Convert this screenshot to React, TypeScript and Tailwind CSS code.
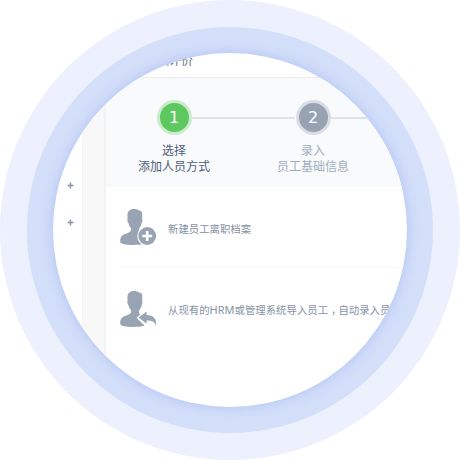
import type { ReactNode } from 'react';

const cjk = "font-['Noto_Sans','Noto_Sans_CJK_SC',sans-serif]";

function Person({ children }: { children: ReactNode }) {
  return (
    <svg className="block h-9 w-[37px] shrink-0" viewBox="0 0 37 36" fill="#98a3b4">
      <path d="M7.400 6C7.700 2 10.500.1 14 .1c1.800 0 3.300.5 4.500 1.200 3 .1 4 1.900 3.800 5.200l-.2 3.300c.6.700.4 3-.4 4.200-.5 2.500-1.500 4.200-2.700 5.800-.4 2 .3 3.300 2 4.200 1.500.8 3.500 1.500 5 2.500L24 34.700c-2.500.8-6.500 1.200-10.500 1.200C6 35.900.2 34.800.2 32.700c0-4.400 1.200-6.200 4.700-7.600 3.200-1.200 5-1.900 5.900-3.300.6-.9.500-2 .1-2.900-1.200-1.300-2-2.800-2.500-4.900-1-1.100-1.400-3.500-.8-4.200z" />
      {children}
    </svg>
  );
}

function Step({ n, active, first, second }: { n: number; active?: boolean; first: string; second: string }) {
  return (
    <div className="flex w-[104px] shrink-0 flex-col items-center">
      <div className={`flex size-[35px] items-center justify-center rounded-full ${active ? 'bg-[#caebcc]' : 'bg-[#d9dee4]'}`}>
        <div className={`flex size-[29px] items-center justify-center rounded-full font-['DejaVu_Sans',sans-serif] text-[16px] leading-none text-white ${active ? 'bg-[#5dc860]' : 'bg-[#97a2b3]'}`}>
          {n}
        </div>
      </div>
      <div className={`mt-2 text-center text-[12px] leading-4 ${active ? 'text-[#4f5d78]' : 'text-[#a3adbe]'}`}>
        <div>{first}</div>
        <div>{second}</div>
      </div>
    </div>
  );
}

export default function App() {
  return (
    <div className={`flex size-[460px] items-center justify-center rounded-full bg-[#ecf1fd] ${cjk}`}>
      <div className="flex size-[406px] items-center justify-center rounded-full bg-[#d4dff9]">
        <div className="flex size-[354px] overflow-hidden rounded-full bg-white shadow-[0_0_13px_rgba(120,150,240,0.4)]">
          <aside className="flex w-[30px] shrink-0 flex-col gap-[30px] border-r border-[#f4f4f4] pt-[129px] pl-[14px]">
            {[0, 1].map((i) => (
              <svg key={i} className="size-[7px]" viewBox="0 0 7 7">
                <path d="M3.500.5v6M.5 3.500h6" stroke="#8792a5" strokeWidth="1.400" />
              </svg>
            ))}
          </aside>
          <div className="w-[23px] shrink-0 border-r-2 border-[#f2f2f3] bg-[#f8f8f8]" />
          <main className="w-[301px] shrink-0 overflow-hidden">
            <header className="h-[25px] border-b border-[#e9ebed] pl-[39px] text-[12px] leading-[15px] whitespace-nowrap text-[#667084]">
              离职评价
            </header>
            <section className="flex h-[109px] bg-[#f8fafc] pt-[22px] pl-4">
              <Step n={1} active first="选择" second="添加人员方式" />
              <div className="-mx-[34px] mt-[17px] h-[2px] w-[103px] shrink-0 bg-[#dfe3e8]" />
              <Step n={2} first="录入" second="员工基础信息" />
              <div className="-ml-[34px] mt-[17px] h-[2px] w-[104px] shrink-0 bg-[#dfe3e8]" />
            </section>
            <section className="pl-[14px] text-[10.400px] whitespace-nowrap text-[#8591a4]">
              <div className="flex h-[81px] items-center border-b border-[#f5f5f5]">
                <Person>
                  <circle cx="27.200" cy="27" r="10" fill="#fff" />
                  <circle cx="27.200" cy="27" r="8.900" />
                  <path d="M27.200 22v10M22.200 27h10" stroke="#fff" strokeWidth="2.600" />
                </Person>
                <span className="mt-[5px] ml-[11px]">新建员工离职档案</span>
              </div>
              <div className="flex h-[82px] items-center">
                <Person>
                  <path d="M16.500 26.700L27 18v4.500c7 .5 10 4.500 9.500 12L34 36h-8.500l-2-2.500z" fill="#fff" />
                  <path d="M18.600 26.500l8-6v3.600c6.500.2 10.600 4 9.400 11-.9-4-3.700-5.700-9.400-5.600v3.300z" />
                </Person>
                <span className="mt-0.5 ml-[11px]">
                  从现有的<span className="text-[11px]">HRM</span>或管理系统导入员工<span className="relative left-[3px]">，</span>自动录入员
                </span>
              </div>
            </section>
          </main>
        </div>
      </div>
    </div>
  );
}
